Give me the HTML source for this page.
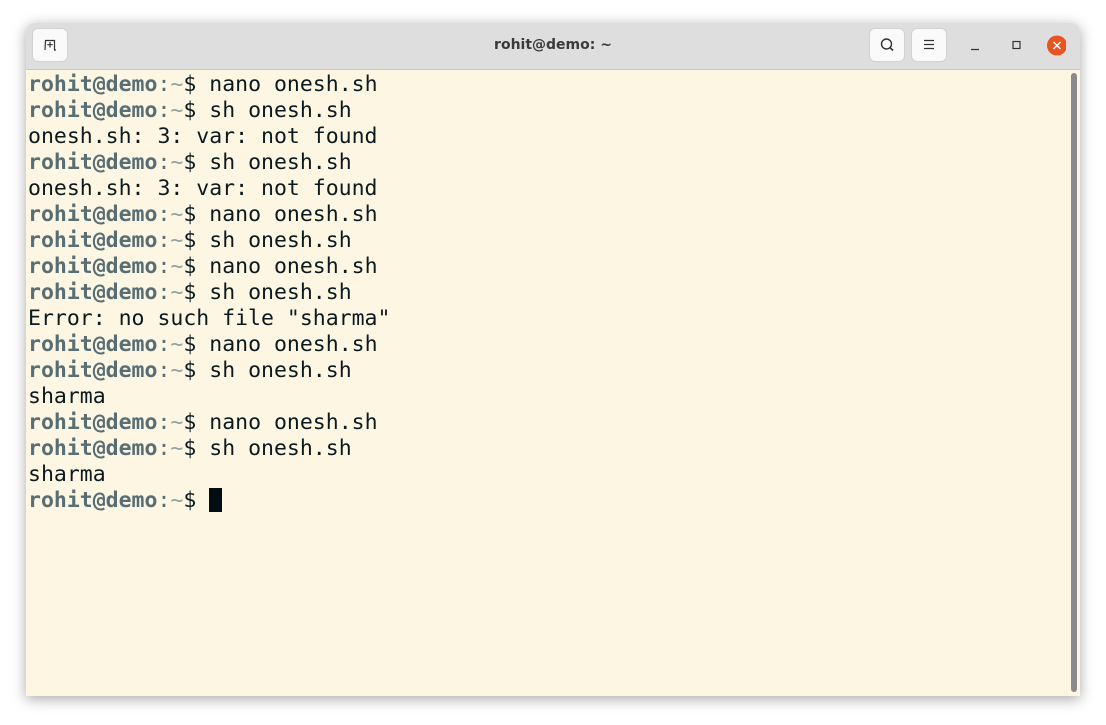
<!DOCTYPE html>
<html><head><style>
html,body{margin:0;width:1106px;height:725px;background:#fff;overflow:hidden}
.win{position:absolute;left:26px;top:23px;width:1054px;height:673px;border-radius:9px 9px 0 0;overflow:hidden;box-shadow:0 3px 14px rgba(0,0,0,.35);background:#fdf6e3}
.hdr{position:absolute;left:0;top:0;width:100%;height:46px;background:#dedede;border-bottom:1px solid #c8c8c8}
.btn{position:absolute;top:6px;width:34px;height:32px;background:#fafafa;border-radius:5px;box-shadow:0 0 0 1px #d2d2d2}
.title{position:absolute;left:0;right:0;top:14px;text-align:center;font:bold 14px "DejaVu Sans","Liberation Sans",sans-serif;color:#3a3a3a}
.term{position:absolute;left:2px;top:49px;font-family:"DejaVu Sans Mono","Liberation Mono",monospace;font-size:21.5px;line-height:26px;color:#0b1a1f;white-space:pre}
.p{color:#586e75;font-weight:bold}.c{color:#586e75}.t{color:#93a1a1}
.cur{display:inline-block;width:13px;height:24px;background:#000d12;vertical-align:-5px}
.sb{position:absolute;left:1045px;top:50px;width:6px;height:619px;background:#8a8a8a;border-radius:3px}
</style></head><body>
<div class="win">
<div class="hdr">
<div class="btn" style="left:7px"><svg width="34" height="32"><path d="M12 21 L12.5 11.5 H21.5 V21 H23 M17 13 V18.5 M14.3 15.7 H19.7" fill="none" stroke="#333" stroke-width="1.2"/></svg></div>
<div class="title">rohit@demo: ~</div>
<div class="btn" style="left:844px"><svg width="34" height="32"><circle cx="16.5" cy="15" r="5" fill="none" stroke="#333" stroke-width="1.4"/><path d="M20 18.5 L23 21.5" stroke="#333" stroke-width="1.6"/></svg></div>
<div class="btn" style="left:886px"><svg width="34" height="32"><path d="M12 11.5H22M12 15.5H22M12 19.5H22" stroke="#333" stroke-width="1.2"/></svg></div>
<svg style="position:absolute;left:940px;top:10px" width="100" height="26"><path d="M5 16.5H13" stroke="#333" stroke-width="1.2"/><rect x="47" y="8.5" width="7" height="7" fill="none" stroke="#333" stroke-width="1.2"/><circle cx="91" cy="12.5" r="10" fill="#e95420"/><path d="M87.5 9L94.5 16M94.5 9L87.5 16" stroke="#fff" stroke-width="1.5"/></svg>
</div>
<div class="term"><span class="p">rohit@demo</span><span class="c">:</span><span class="t">~</span>$ nano onesh.sh
<span class="p">rohit@demo</span><span class="c">:</span><span class="t">~</span>$ sh onesh.sh
onesh.sh: 3: var: not found
<span class="p">rohit@demo</span><span class="c">:</span><span class="t">~</span>$ sh onesh.sh
onesh.sh: 3: var: not found
<span class="p">rohit@demo</span><span class="c">:</span><span class="t">~</span>$ nano onesh.sh
<span class="p">rohit@demo</span><span class="c">:</span><span class="t">~</span>$ sh onesh.sh
<span class="p">rohit@demo</span><span class="c">:</span><span class="t">~</span>$ nano onesh.sh
<span class="p">rohit@demo</span><span class="c">:</span><span class="t">~</span>$ sh onesh.sh
Error: no such file "sharma"
<span class="p">rohit@demo</span><span class="c">:</span><span class="t">~</span>$ nano onesh.sh
<span class="p">rohit@demo</span><span class="c">:</span><span class="t">~</span>$ sh onesh.sh
sharma
<span class="p">rohit@demo</span><span class="c">:</span><span class="t">~</span>$ nano onesh.sh
<span class="p">rohit@demo</span><span class="c">:</span><span class="t">~</span>$ sh onesh.sh
sharma
<span class="p">rohit@demo</span><span class="c">:</span><span class="t">~</span>$ <span class="cur"></span></div>
<div class="sb"></div>
</div>
</body></html>
